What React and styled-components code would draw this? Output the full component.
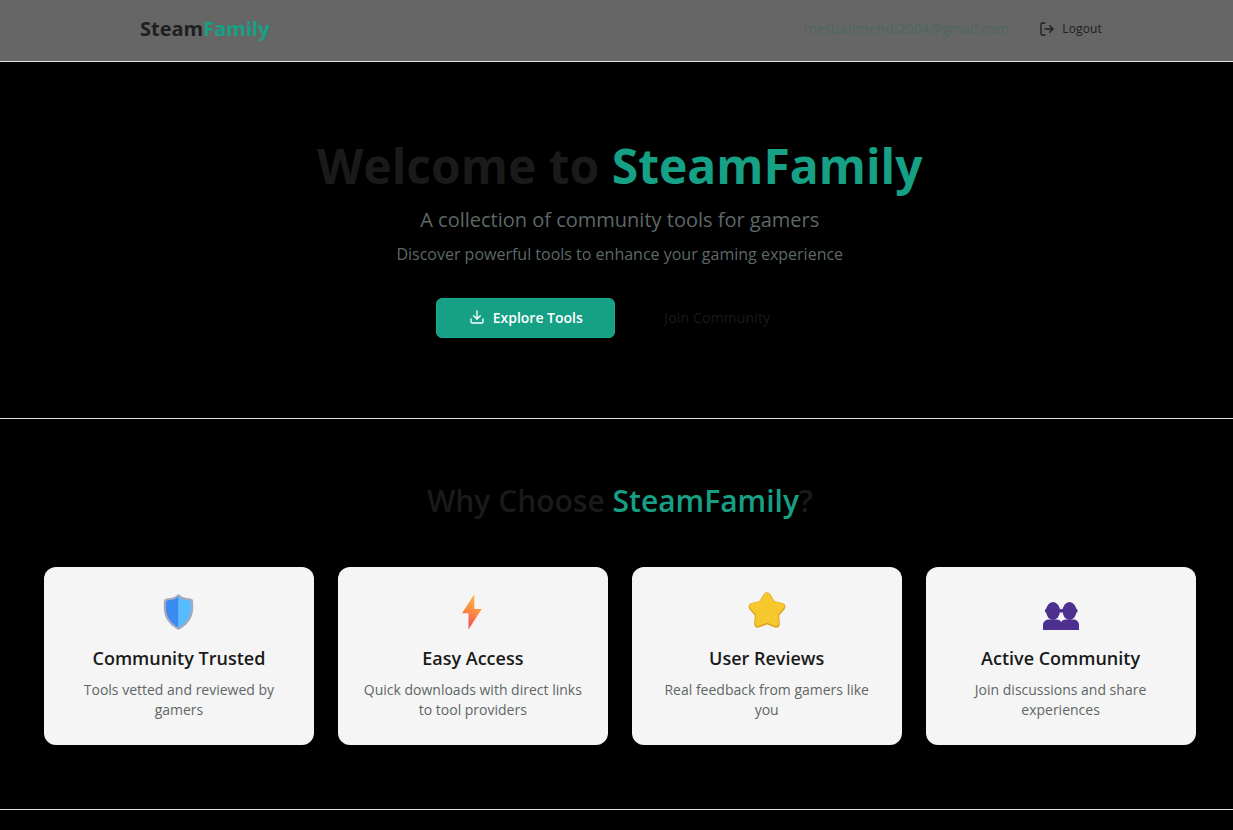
import React from "react";
import styled, { createGlobalStyle } from "styled-components";
import { Download, LogOut } from "lucide-react";

const GlobalStyle = createGlobalStyle`
  html, body {
    margin: 0;
    padding: 0;
    background: #000;
    overflow: hidden;
    font-family: "Open Sans", sans-serif;
  }
  * { box-sizing: border-box; }
`;

const features = [
  { icon: <ShieldIcon />, title: "Community Trusted", text: "Tools vetted and reviewed by gamers" },
  { icon: <BoltIcon />, title: "Easy Access", text: "Quick downloads with direct links to tool providers" },
  { icon: <StarIcon />, title: "User Reviews", text: "Real feedback from gamers like you" },
  { icon: <PeopleIcon />, title: "Active Community", text: "Join discussions and share experiences" },
];

function ShieldIcon() {
  return (
    <svg width="31" height="38" viewBox="0 0 31 38">
      <path d="M15.500 1c2 2.300 6 4 9.500 4.200 1.200 0 3 .3 4.800 1.300 1.500 11.500.5 22.500-14.300 30.500C.700 29 -.300 18 1.200 6.500 3 5.500 4.800 5.200 6 5.200 9.500 5 13.500 3.300 15.500 1z" fill="#aba7bd" />
      <path d="M15.500 3.200v31.500C3 27.500 2 17.500 3.200 8 5 7.300 6 7.200 7 7.100c3.500-.3 6.500-1.700 8.500-3.900z" fill="#3b8af0" />
      <path d="M15.500 3.200c2 2.200 5 3.600 8.500 3.900 1 .1 2 .2 3.800.9 1.200 9.500.2 19.500-12.300 26.700z" fill="#55bdff" />
    </svg>
  );
}

function BoltIcon() {
  return (
    <svg width="22" height="36" viewBox="0 0 22 36">
      <defs>
        <linearGradient id="bolt" x1="0.6" y1="0" x2="0.35" y2="1">
          <stop offset="0" stopColor="#fdb640" />
          <stop offset="0.5" stopColor="#fb8a42" />
          <stop offset="1" stopColor="#f1425e" />
        </linearGradient>
      </defs>
      <path d="M12.300 0.300 0 19.300h6.500v16.200L19.700 15h-7.400z" fill="url(#bolt)" />
    </svg>
  );
}

function StarIcon() {
  const points = "19,4.500 24,12.620 33.270,14.860 27.080,22.130 27.820,31.640 19,28 10.180,31.640 10.920,22.130 4.730,14.860 14,12.620";
  return (
    <svg width="38" height="40" viewBox="0 0 38 40">
      <polygon points={points} fill="#dfa31a" stroke="#dfa31a" strokeWidth="8" strokeLinejoin="round" />
      <polygon points={points} fill="#f5c92e" stroke="#f5c92e" strokeWidth="6" strokeLinejoin="round" transform="translate(0 -.6)" />
    </svg>
  );
}

function PeopleIcon() {
  return (
    <svg width="36" height="36" viewBox="0 0 36 36">
      <g fill="#4c2f8e">
        <ellipse cx="10" cy="17" rx="7" ry="9" />
        <ellipse cx="26.500" cy="17" rx="7" ry="9" />
        <rect x="2" y="15" width="2" height="3.500" rx="1" />
        <rect x="16" y="15" width="4.500" height="3.500" rx="1.700" />
        <rect x="32.500" y="15" width="2" height="3.500" rx="1" />
        <path d="M0 36v-5c0-3.500 3-5.500 6.500-5.500h7c2.500 0 4 1 4.700 2.800.7-1.800 2.200-2.800 4.700-2.800h7c3.500 0 6.100 2 6.100 5.500v5z" />
      </g>
    </svg>
  );
}

export default function App() {
  return (
    <Page>
      <GlobalStyle />
      <Navbar>
        <Logo>Steam<span>Family</span></Logo>
        <NavRight>
          <Email>mesbahmehdi2004@gmail.com</Email>
          <LogoutButton>
            <LogOut size={16} strokeWidth={2} />
            Logout
          </LogoutButton>
        </NavRight>
      </Navbar>

      <Hero>
        <HeroTitle>Welcome to <span>SteamFamily</span></HeroTitle>
        <HeroSubtitle>A collection of community tools for gamers</HeroSubtitle>
        <HeroText>Discover powerful tools to enhance your gaming experience</HeroText>
        <HeroActions>
          <PrimaryButton>
            <Download size={16} strokeWidth={2} />
            Explore Tools
          </PrimaryButton>
          <GhostButton>Join Community</GhostButton>
        </HeroActions>
      </Hero>

      <Features>
        <SectionTitle>Why Choose <span>SteamFamily</span>?</SectionTitle>
        <CardGrid>
          {features.map((f) => (
            <Card key={f.title}>
              <CardIcon>{f.icon}</CardIcon>
              <CardTitle>{f.title}</CardTitle>
              <CardText>{f.text}</CardText>
            </Card>
          ))}
        </CardGrid>
      </Features>
    </Page>
  );
}

const Page = styled.div`
  width: 1239.5px;
  min-height: 830px;
  background: #000;
`;

const Navbar = styled.header`
  height: 62px;
  background: #666;
  border-bottom: 1px solid #e5e5e5;
  padding: 0 137.5px 4px 140px;
  display: flex;
  align-items: center;
  justify-content: space-between;
`;

const Logo = styled.div`
  font-size: 20px;
  font-weight: 700;
  color: #1f1f1f;
  span { color: #16a085; }
`;

const NavRight = styled.div`
  display: flex;
  align-items: center;
  gap: 30px;
`;

const Email = styled.span`
  font-size: 14px;
  color: #4d6660;
`;

const LogoutButton = styled.div`
  display: flex;
  align-items: center;
  gap: 7px;
  font-size: 12px;
  font-weight: 500;
  letter-spacing: 0.15px;
  color: #1f1f1f;
`;

const Hero = styled.section`
  height: 357px;
  border-bottom: 1px solid #e5e5e5;
  padding-top: 71px;
  display: flex;
  flex-direction: column;
  align-items: center;
`;

const HeroTitle = styled.h1`
  margin: 0;
  font-size: 48px;
  line-height: 65px;
  font-weight: 700;
  color: #1a1a1a;
  span { color: #16a085; }
`;

const HeroSubtitle = styled.p`
  margin: 8px 0 0;
  font-size: 20px;
  line-height: 27px;
  color: #5e6868;
`;

const HeroText = styled.p`
  margin: 10px 0 0;
  font-size: 16px;
  line-height: 22px;
  color: #5e6868;
`;

const HeroActions = styled.div`
  margin-top: 33px;
  display: flex;
  align-items: center;
  gap: 16px;
`;

const PrimaryButton = styled.button`
  width: 179px;
  height: 40px;
  border: 1px solid #1bac90;
  border-radius: 6px;
  background: #16a085;
  color: #fff;
  font-family: inherit;
  font-size: 14px;
  font-weight: 600;
  padding: 0 0 2px;
  display: flex;
  align-items: center;
  justify-content: center;
  gap: 8px;
`;

const GhostButton = styled.button`
  width: 172px;
  height: 40px;
  border: 0;
  background: transparent;
  color: #1a1a1a;
  font-family: inherit;
  font-size: 14px;
  font-weight: 500;
  letter-spacing: 0.15px;
  padding: 0 0 2px;
`;

const Features = styled.section`
  height: 391px;
  border-bottom: 1px solid #e5e5e5;
  padding: 60px 44px 0;
`;

const SectionTitle = styled.h2`
  margin: 0 0 44px;
  text-align: center;
  font-size: 30px;
  line-height: 44px;
  font-weight: 600;
  color: #1a1a1a;
  span { color: #16a085; }
`;

const CardGrid = styled.div`
  display: grid;
  grid-template-columns: repeat(4, 1fr);
  gap: 24px;
`;

const Card = styled.article`
  height: 178px;
  background: #f5f5f5;
  border-radius: 12px;
  padding: 24px 24px 0;
  text-align: center;
`;

const CardIcon = styled.div`
  height: 42px;
  display: flex;
  align-items: center;
  justify-content: center;
`;

const CardTitle = styled.h3`
  margin: 13px -8px 9px;
  font-size: 18px;
  line-height: 25px;
  font-weight: 600;
  color: #1a1a1a;
`;

const CardText = styled.p`
  margin: 0;
  font-size: 14px;
  line-height: 20px;
  color: #5f6666;
`;
